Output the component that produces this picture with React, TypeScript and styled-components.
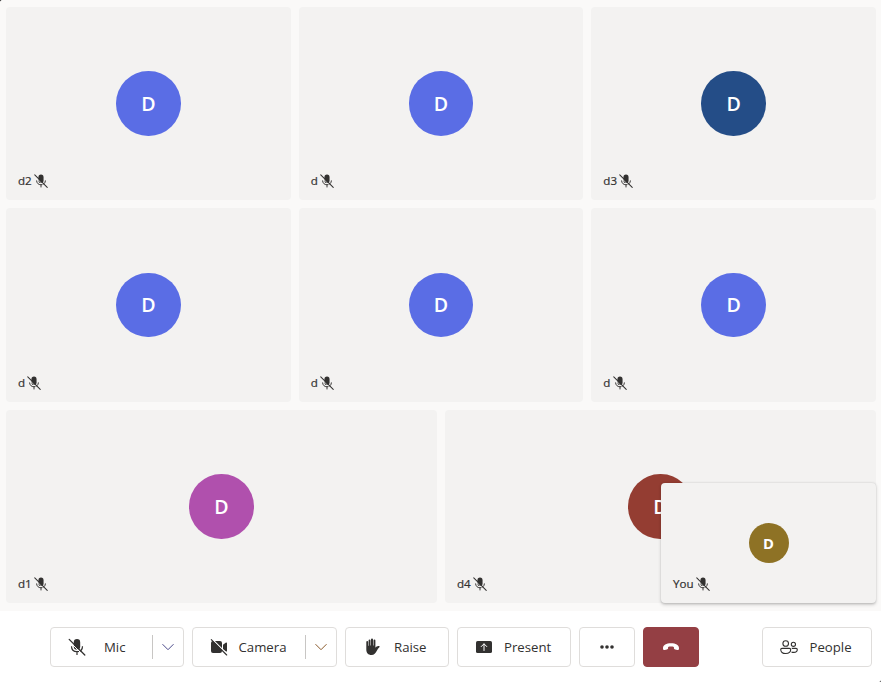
import React from 'react';
import styled, { createGlobalStyle } from 'styled-components';

const GlobalStyle = createGlobalStyle`
  *, *::before, *::after { box-sizing: border-box; }
  body { margin: 0; background: #2a2a2a; overflow: hidden; }
`;

const Shell = styled.main`
  display: flex;
  flex-direction: column;
  width: 881px;
  height: 682px;
  overflow: hidden;
  border-radius: 3px 0 2px 0;
  color: #323130;
  background: #fff;
  font-family: 'Open Sans', 'Noto Sans', sans-serif;
`;

const Stage = styled.section`
  position: relative;
  height: 611px;
  padding: 7px 5px 8px 6px;
  background: #faf9f8;
`;

const Gallery = styled.div`
  display: grid;
  grid-template-columns: repeat(6, 1fr);
  grid-template-rows: repeat(3, 1fr);
  gap: 8px;
  height: 100%;
`;

const Tile = styled.article<{ $span: number }>`
  position: relative;
  grid-column: span ${p => p.$span};
  display: flex;
  align-items: center;
  justify-content: center;
  border-radius: 4px;
  background: #f3f2f1;
`;

const SelfTile = styled(Tile)`
  position: absolute;
  right: 5px;
  bottom: 8px;
  width: 215px;
  height: 120px;
  box-shadow: 0 1.6px 3.6px rgba(0, 0, 0, 0.16), 0 0.3px 2px rgba(0, 0, 0, 0.12);
`;

const Avatar = styled.div<{ $color: string; $size: number }>`
  display: flex;
  align-items: center;
  justify-content: center;
  width: ${p => p.$size}px;
  height: ${p => p.$size}px;
  border-radius: 50%;
  background: ${p => p.$color};
  color: #fff;
  font-size: ${p => (p.$size > 50 ? 19.6 : 14.8)}px;
  font-weight: ${p => (p.$size > 50 ? 600 : 700)};
  line-height: 1;
`;

const NameTag = styled.div`
  position: absolute;
  left: 12px;
  bottom: 10px;
  display: flex;
  align-items: center;
  gap: 1.4px;
  height: 18px;
  font-size: 11.6px;
  font-weight: 500;
  line-height: 18px;
  -webkit-text-stroke: 0.2px currentColor;
`;

const Controls = styled.footer`
  display: flex;
  align-items: center;
  gap: 8px;
  height: 71px;
  padding: 1px 9px 0 50px;
`;

const ControlButton = styled.button<{ $width: number; $danger?: boolean; $push?: boolean }>`
  display: flex;
  align-items: center;
  justify-content: ${p => (p.$width < 60 ? 'center' : 'flex-start')};
  flex: none;
  width: ${p => p.$width}px;
  height: 40px;
  margin-left: ${p => (p.$push ? 'auto' : '0')};
  padding: 0 ${p => (p.$width < 60 ? 0 : 16)}px;
  border: 1px solid ${p => (p.$danger ? '#943f44' : '#dfdddb')};
  border-radius: 4px;
  background: ${p => (p.$danger ? '#943f44' : '#fff')};
  color: ${p => (p.$danger ? '#fff' : '#323130')};
  font: inherit;
`;

const SplitButton = styled(ControlButton)`
  padding-right: 0;
`;

const Label = styled.span<{ $gap: number }>`
  margin-left: ${p => p.$gap}px;
  font-size: 13.2px;
  line-height: 20px;
`;

const MenuPart = styled.span`
  display: flex;
  align-items: center;
  justify-content: center;
  width: 31px;
  height: 24px;
  margin-left: auto;
  padding-right: 1px;
  border-left: 1px solid #c8c6c4;
`;

const Icon = styled.svg<{ $size: number }>`
  display: block;
  flex: none;
  width: ${p => p.$size}px;
  height: ${p => p.$size}px;
`;

function MicOff({ size }: { size: number }) {
  return (
    <Icon $size={size} viewBox="0 0 20 20" fill="none" aria-hidden>
      <rect x="6.8" y="2" width="6.4" height="10.6" rx="3.2" fill="currentColor" />
      <path d="M4.5 9.3c0 3.3 2.3 5.4 5.5 5.4s5.5-2.1 5.5-5.4M10 14.7v3.3" stroke="currentColor" strokeWidth="1.2" />
      <path d="M1.4 3.4 16.6 18.6" stroke={size < 18 ? '#f3f2f1' : '#fff'} strokeWidth="1" />
      <path d="M2.2 2.4 17.8 18" stroke="currentColor" strokeWidth="1.3" strokeLinecap="round" />
    </Icon>
  );
}

function CameraOff() {
  return (
    <Icon $size={20} viewBox="0 0 20 20" aria-hidden>
      <path d="M2 6a2 2 0 0 1 2-2h7a2 2 0 0 1 2 2v8a2 2 0 0 1-2 2H4a2 2 0 0 1-2-2zm12 1.8 3-2.3c.4-.3 1 0 1 .5v8c0 .5-.6.8-1 .5l-3-2.3z" fill="currentColor" />
      <path d="m3 2 15.5 15.5" stroke="#fff" strokeWidth="1.2" />
      <path d="m2.3 2.6 15.4 15.4" stroke="currentColor" strokeWidth="1.1" strokeLinecap="round" />
    </Icon>
  );
}

function Hand() {
  return (
    <Icon $size={20} viewBox="0 0 20 20" aria-hidden>
      <path d="M4.3 9.5V5a.9.9 0 0 1 1.8 0v3.7h.5V3.4a.95.95 0 0 1 1.9 0v5H9V2.5a1 1 0 0 1 2 0v5.9h.5V3.5a.95.95 0 0 1 1.9 0v7.2c.7-.8 1.8-1.7 3-1.7 1 0 1.5.6 1.2 1.1-1.2 1-2.1 2.4-2.9 4-1.2 2.4-2.4 3.9-5.2 3.9-3.4 0-5.2-2.2-5.2-5.5z" fill="currentColor" />
    </Icon>
  );
}

function Present() {
  return (
    <Icon $size={20} viewBox="0 0 20 20" fill="none" aria-hidden>
      <rect x="2" y="4" width="16" height="12" rx="1.6" fill="currentColor" />
      <path d="M10 13.5V7M7.2 9.6 10 6.8l2.8 2.8" stroke="#fff" strokeLinecap="round" />
    </Icon>
  );
}

function More() {
  return (
    <Icon $size={20} viewBox="0 0 20 20" fill="currentColor" aria-hidden>
      <circle cx="5" cy="10" r="1.8" />
      <circle cx="10" cy="10" r="1.8" />
      <circle cx="15" cy="10" r="1.8" />
    </Icon>
  );
}

function HangUp() {
  return (
    <Icon $size={20} viewBox="0 0 20 20" fill="currentColor" aria-hidden>
      <path d="M2 10.9C2 8 5.3 6.2 10 6.2s8 1.8 8 4.7v.5c0 1.1-.8 1.7-1.8 1.5l-2-.4c-.8-.2-1.3-.7-1.3-1.5v-1.1c-1.7-.6-4.1-.6-5.8 0V11c0 .8-.5 1.3-1.3 1.5l-2 .4c-1 .2-1.8-.4-1.8-1.5z" />
    </Icon>
  );
}

function People() {
  return (
    <Icon $size={20} viewBox="0 0 20 20" fill="none" stroke="currentColor" strokeWidth="1.1" aria-hidden>
      <circle cx="6.7" cy="6.5" r="2.8" />
      <circle cx="14.4" cy="7.3" r="2.1" />
      <path d="M3 11.4h7.4c.8 0 1.3.5 1.3 1.2 0 2.4-1.8 3.9-5 3.9s-5-1.5-5-3.9c0-.7.5-1.2 1.3-1.2Zm9.8 0H17c.8 0 1.3.5 1.3 1.1 0 1.8-1.3 2.9-3.5 2.9-.9 0-1.7-.2-2.3-.5" />
    </Icon>
  );
}

function Chevron({ color }: { color: string }) {
  return (
    <Icon $size={12} viewBox="0 0 12 12" fill="none" stroke={color} aria-hidden>
      <path d="m.5 3.2 5.5 5.5 5.5-5.5" />
    </Icon>
  );
}

const participants = [
  { name: 'd2', color: '#5a6de5', span: 2 },
  { name: 'd', color: '#5a6de5', span: 2 },
  { name: 'd3', color: '#244d87', span: 2 },
  { name: 'd', color: '#5a6de5', span: 2 },
  { name: 'd', color: '#5a6de5', span: 2 },
  { name: 'd', color: '#5a6de5', span: 2 },
  { name: 'd1', color: '#b050ad', span: 3 },
  { name: 'd4', color: '#943d32', span: 3 },
];

export default function App() {
  return (
    <Shell>
      <GlobalStyle />
      <Stage>
        <Gallery>
          {participants.map((p, i) => (
            <Tile key={i} $span={p.span}>
              <Avatar $color={p.color} $size={64.5}>D</Avatar>
              <NameTag>{p.name}<MicOff size={16} /></NameTag>
            </Tile>
          ))}
        </Gallery>
        <SelfTile $span={1}>
          <Avatar $color="#8e7225" $size={40}>D</Avatar>
          <NameTag>You<MicOff size={16} /></NameTag>
        </SelfTile>
      </Stage>
      <Controls>
        <SplitButton $width={134}><MicOff size={20} /><Label $gap={17}>Mic</Label><MenuPart><Chevron color="#4b4a8a" /></MenuPart></SplitButton>
        <SplitButton $width={145}><CameraOff /><Label $gap={9.5}>Camera</Label><MenuPart><Chevron color="#8a5a2c" /></MenuPart></SplitButton>
        <ControlButton $width={104}><Hand /><Label $gap={12}>Raise</Label></ControlButton>
        <ControlButton $width={114}><Present /><Label $gap={10}>Present</Label></ControlButton>
        <ControlButton $width={56} aria-label="More"><More /></ControlButton>
        <ControlButton $width={56} $danger aria-label="Leave"><HangUp /></ControlButton>
        <ControlButton $width={110} $push><People /><Label $gap={10.5}>People</Label></ControlButton>
      </Controls>
    </Shell>
  );
}
